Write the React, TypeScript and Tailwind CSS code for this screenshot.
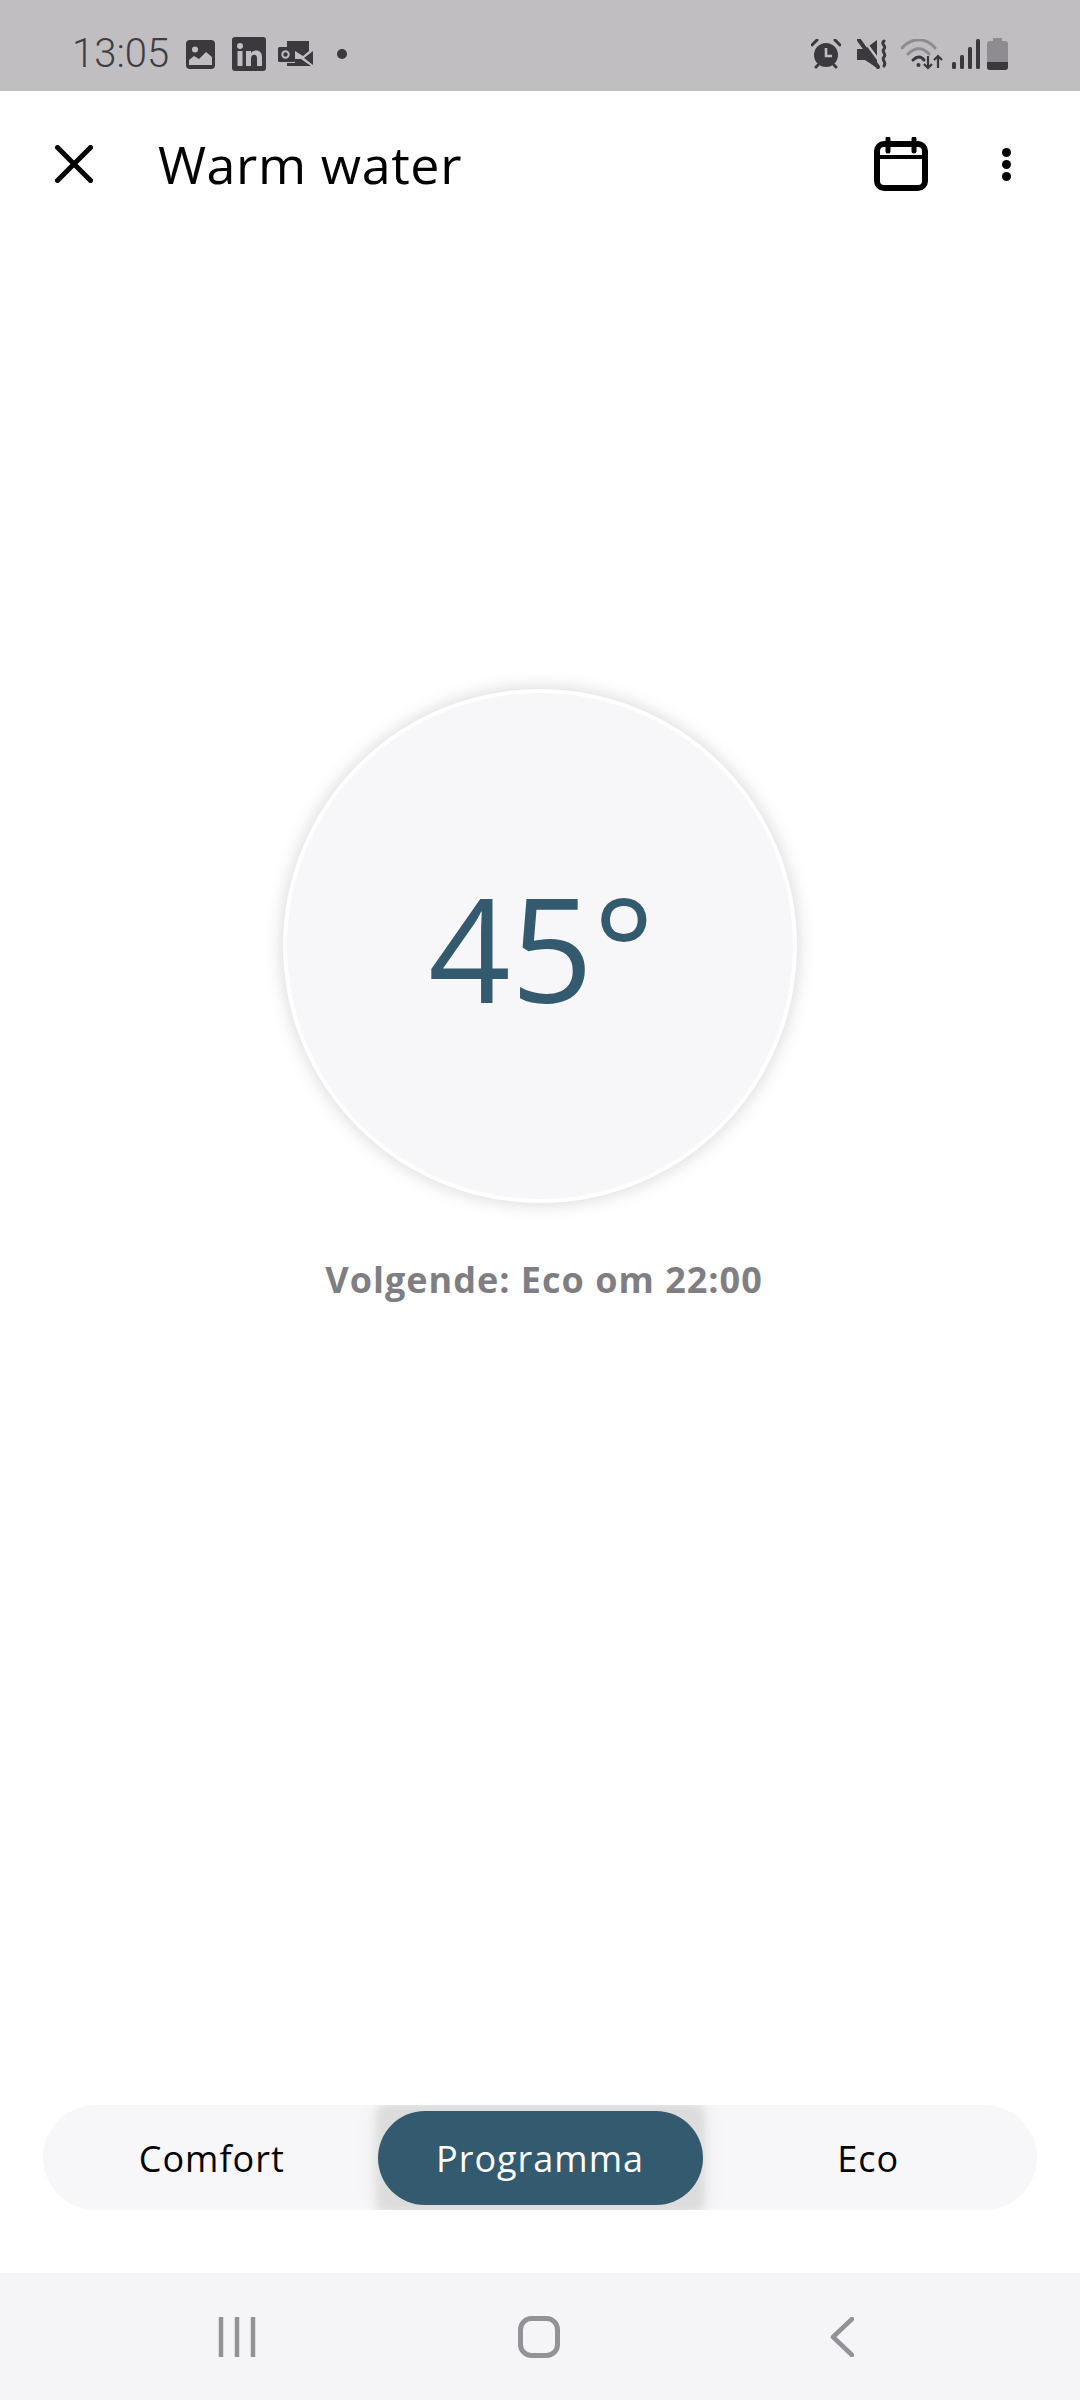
const OPEN = "font-['Open_Sans',sans-serif]";

function StatusLeft() {
  return (
    <div className="flex items-center">
      <span className="font-['Roboto',sans-serif] text-[40px] leading-none text-[#3f3d41] font-light ml-[72px] w-[114px]">13:05</span>
      <svg viewBox="0 0 29 29" className="w-[29px] h-[29px]">
        <rect width="29" height="29" rx="4" fill="#3b393d" />
        <circle cx="9" cy="9.500" r="3" fill="#c0bec1" />
        <path d="M3 25v-5l5-4 5 3 7-7 6 5v8z" fill="#c0bec1" />
      </svg>
      <svg viewBox="0 0 34 34" className="w-[34px] h-[34px] ml-[17px]">
        <rect width="34" height="34" rx="3" fill="#3b393d" />
        <circle cx="8" cy="9" r="3" fill="#c0bec1" />
        <rect x="5.500" y="14" width="5" height="15" fill="#c0bec1" />
        <path d="M14 14h5v2.200c1-1.600 2.800-2.600 5-2.600 4 0 6 2.400 6 6.800V29h-5v-7.600c0-2.200-.8-3.600-2.800-3.600S19 19.400 19 21.400V29h-5z" fill="#c0bec1" />
      </svg>
      <svg viewBox="0 0 35 26" className="w-[35px] h-[26px] ml-[12px]">
        <path d="M9 0h22v10l-6 5-8-5H9z" fill="#3b393d" />
        <path d="M35 10v14l-9-7z" fill="#3b393d" />
        <path d="M9 25v-3h8v-4h6l10 7z" fill="#3b393d" />
        <rect x="0" y="6" width="17" height="15" rx="1.500" fill="#3b393d" />
        <circle cx="7.500" cy="13.500" r="3.200" fill="none" stroke="#c0bec1" strokeWidth="2" />
      </svg>
      <div className="w-[10px] h-[10px] rounded-full bg-[#3b393d] ml-[24px]" />
    </div>
  );
}

function StatusRight() {
  return (
    <div className="flex items-center">
      <svg viewBox="0 0 30 30" className="w-[30px] h-[30px]">
        <circle cx="15" cy="16" r="12" fill="#3b393d" />
        <path d="M1 6l5-5M29 6l-5-5M5 28l2-2M25 28l-2-2" stroke="#3b393d" strokeWidth="3" strokeLinecap="round" />
        <path d="M15 9v8h6" fill="none" stroke="#c0bec1" strokeWidth="2.600" />
      </svg>
      <svg viewBox="0 0 30 30" className="w-[30px] h-[30px] ml-[16px]">
        <path d="M0 10h8l12-9v28L8 21H0z" fill="#3b393d" />
        <path d="M6 0l20 27" stroke="#c0bec1" strokeWidth="2.500" />
        <path d="M2 1l19 27" stroke="#3b393d" strokeWidth="4" strokeLinecap="round" />
        <path d="M27 2c-4 3 3 5 0 8s3 5 0 8 3 5 0 9" fill="none" stroke="#3b393d" strokeWidth="3" strokeLinecap="round" />
      </svg>
      <svg viewBox="0 0 42 31" className="w-[42px] h-[31px] ml-[14px]">
        <path d="M1 9c10-11 24-11 33 0" fill="none" stroke="#8e8c90" strokeWidth="3" strokeLinecap="round" />
        <path d="M7 15c7-7 15-7 21 0" fill="none" stroke="#8e8c90" strokeWidth="3" strokeLinecap="round" />
        <path d="M12 21c4-4 8-4 11 0" fill="none" stroke="#3b393d" strokeWidth="3" strokeLinecap="round" />
        <circle cx="17.500" cy="26" r="2" fill="#3b393d" />
        <path d="M27 17v12M23 25l4 4 4-4" fill="none" stroke="#3b393d" strokeWidth="2.200" />
        <path d="M37 29V17M33 21l4-4 4 4" fill="none" stroke="#3b393d" strokeWidth="2.200" />
      </svg>
      <svg viewBox="0 0 28 30" className="w-[28px] h-[30px] ml-[9px]">
        <rect x="0" y="23" width="4" height="7" rx="1.500" fill="#3b393d" />
        <rect x="8" y="16" width="4" height="14" rx="1.500" fill="#3b393d" />
        <rect x="16" y="8" width="4" height="22" rx="1.500" fill="#3b393d" />
        <rect x="24" y="0" width="4" height="30" rx="1.500" fill="#3b393d" />
      </svg>
      <svg viewBox="0 0 21 32" className="w-[21px] h-[32px] ml-[7px]">
        <path d="M6 0h9v3h3a3 3 0 0 1 3 3v23a3 3 0 0 1-3 3H3a3 3 0 0 1-3-3V6a3 3 0 0 1 3-3h3z" fill="#8e8c90" />
        <path d="M0 24h21v5a3 3 0 0 1-3 3H3a3 3 0 0 1-3-3z" fill="#3b393d" />
      </svg>
    </div>
  );
}

export default function App() {
  return (
    <div className={`w-[1080px] h-[2400px] bg-white flex flex-col ${OPEN}`}>
      <div className="h-[91px] shrink-0 bg-[#c0bec1] flex items-center justify-between pr-[72px] pt-[17px]">
        <StatusLeft />
        <StatusRight />
      </div>

      <header className="h-[146px] shrink-0 flex items-center pl-[55px] pr-[69px]">
        <svg viewBox="0 0 38 38" className="w-[38px] h-[38px]">
          <path d="M2.500 2.500l33 33M35.500 2.500l-33 33" stroke="#000" strokeWidth="5" strokeLinecap="round" />
        </svg>
        <h1 className="ml-[65px] text-[52px] leading-none tracking-[0.6px] text-black flex-1">Warm water</h1>
        <svg viewBox="0 0 54 54" className="w-[54px] h-[54px]" fill="none" stroke="#000">
          <rect x="3" y="7" width="48" height="44" rx="7" strokeWidth="6" />
          <path d="M2 20h50" strokeWidth="4" />
          <path d="M14 2v12M40 2v12" strokeWidth="5" strokeLinecap="round" />
        </svg>
        <div className="ml-[74px] flex flex-col gap-[3px]">
          {[0, 1, 2].map((i) => (
            <div key={i} className="w-[9px] h-[9px] rounded-full bg-black" />
          ))}
        </div>
      </header>

      <main className="flex-1 flex flex-col items-center">
        <div className="mt-[452px] w-[514px] h-[514px] rounded-full bg-[#f7f6f8] border-[4px] border-white shadow-[0_0_18px_rgba(60,55,70,0.22)] flex items-center justify-center">
          <span className="text-[144px] leading-none text-[#345a70] ml-[3px] mt-[2px]">45°</span>
        </div>
        <p className="mt-[59px] ml-[8px] text-[36px] leading-none font-bold tracking-[1px] text-[#7f7e83]">Volgende: Eco om 22:00</p>
      </main>

      <div className="shrink-0 px-[43px] pb-[63px]">
        <div className="h-[105px] rounded-full bg-[#f7f6f8] overflow-hidden flex items-center text-[36px] tracking-[1px] pt-[3px]">
          <div className="flex-1 flex justify-center text-black pl-[3px]">Comfort</div>
          <div className="relative w-[325px] h-[94px] -mt-[3px]">
            <div className="absolute -inset-y-[8px] -inset-x-[2px] rounded-[12px] bg-[#dcdcdd] blur-[4px] shadow-[0_0_30px_rgba(0,0,0,0.04)]" />
            <div className="relative h-full rounded-[47px] bg-[#345a70] text-white flex items-center justify-center pt-[3px]">Programma</div>
          </div>
          <div className="flex-1 flex justify-center text-black pr-[3px]">Eco</div>
        </div>
      </div>

      <nav className="h-[127px] shrink-0 bg-[#f5f4f6] flex items-center pl-[218px]">
        <svg viewBox="0 0 38 40" className="w-[38px] h-[40px]">
          <path d="M3 1v38M19 1v38M35 1v38" stroke="#949296" strokeWidth="4.500" strokeLinecap="round" />
        </svg>
        <svg viewBox="0 0 42 42" className="w-[42px] h-[42px] ml-[262px]">
          <rect x="2.500" y="2.500" width="37" height="37" rx="11" fill="none" stroke="#949296" strokeWidth="5" />
        </svg>
        <svg viewBox="0 0 24 40" className="w-[24px] h-[40px] ml-[270px]">
          <path d="M22 2L3 20l19 18" fill="none" stroke="#949296" strokeWidth="4.500" strokeLinecap="round" strokeLinejoin="round" />
        </svg>
      </nav>
    </div>
  );
}
